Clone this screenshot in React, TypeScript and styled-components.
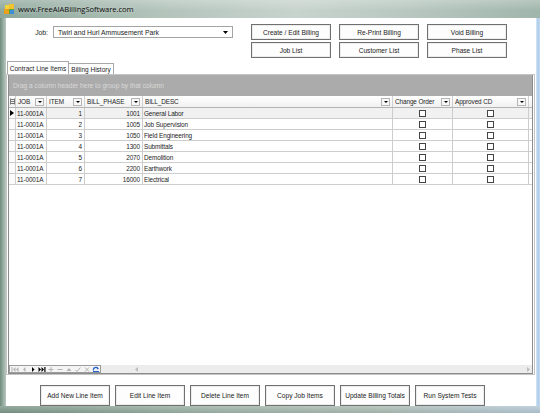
import styled, { createGlobalStyle } from "styled-components";

const GlobalStyle = createGlobalStyle`
  html, body {
    margin: 0;
    padding: 0;
    background: #fff;
  }
  body {
    font-family: "Liberation Sans", Arial, sans-serif;
  }
  * {
    box-sizing: border-box;
  }
`;

const Window = styled.div`
  width: 540px;
  height: 413px;
  display: flex;
  flex-direction: column;
  overflow: hidden;
  font-family: "Liberation Sans", Arial, sans-serif;
  color: #1c1c1c;
`;

const TitleBar = styled.div`
  height: 18px;
  flex: none;
  display: flex;
  align-items: center;
  gap: 3px;
  padding-left: 4px;
  background:
    linear-gradient(to bottom, rgba(255, 255, 255, 0.25), rgba(255, 255, 255, 0) 60%),
    linear-gradient(to right, #8ea79b 0%, #b3c4bb 30%, #c7d3cd 55%, #b8c8c0 75%, #a0b5ab 100%);
`;

const TitleText = styled.span`
  font-family: "Open Sans", "Liberation Sans", sans-serif;
  font-size: 7.6px;
  letter-spacing: -0.05px;
  color: #0b0b0b;
  text-shadow: 0 0 4px rgba(255, 255, 255, 0.7);
`;

const Middle = styled.div`
  flex: 1;
  display: flex;
  min-height: 0;
`;

const LeftFrame = styled.div`
  width: 6px;
  flex: none;
  background: linear-gradient(to right, #6f8b7e, #94ab9f 50%, #b7c8bf);
`;

const RightFrame = styled.div`
  width: 4px;
  flex: none;
  background: linear-gradient(to right, #dbe8f3, #a9cbeb 50%, #c9dcef);
`;

const BottomFrame = styled.div`
  height: 7px;
  flex: none;
  background:
    linear-gradient(to bottom, rgba(255, 255, 255, 0.2), rgba(0, 0, 0, 0.05)),
    linear-gradient(to right, #7a9587, #9db2a7 40%, #a9bab1 70%, #b3c6d4 100%);
`;

const Client = styled.div`
  flex: 1;
  display: flex;
  flex-direction: column;
  background: #fff;
  min-width: 0;
`;

const TopSection = styled.div`
  height: 43px;
  flex: none;
  display: flex;
  align-items: flex-start;
  padding-top: 6px;
`;

const JobGroup = styled.div`
  display: flex;
  align-items: center;
  gap: 5px;
  margin-top: 2px;
`;

const JobLabel = styled.label`
  width: 42px;
  text-align: right;
  font-size: 6.8px;
`;

const Combo = styled.div`
  width: 180px;
  height: 12px;
  display: flex;
  align-items: center;
  padding: 0 4px;
  border: 1px solid #a4a4a4;
  background: #fff;
  font-size: 6.8px;
`;

const ComboText = styled.span`
  flex: 1;
  white-space: nowrap;
`;

const ButtonGrid = styled.div`
  margin-left: 18px;
  display: grid;
  grid-template-columns: repeat(3, 80px);
  grid-auto-rows: 16px;
  column-gap: 8px;
  row-gap: 2px;
`;

const WinButton = styled.button<{ $h?: number }>`
  height: ${(p) => p.$h ?? 16}px;
  width: 100%;
  padding: 0;
  margin: 0;
  border: 1px solid #707070;
  background: #fdfdfd;
  box-shadow: inset 0 0 0 1px #ececec;
  font-family: "Liberation Sans", Arial, sans-serif;
  font-size: 6.6px;
  color: #222;
  white-space: nowrap;
`;

const TabStrip = styled.div`
  height: 13px;
  flex: none;
  display: flex;
  align-items: flex-end;
  padding-left: 1px;
`;

const Tab = styled.div<{ $active?: boolean; $w: number }>`
  width: ${(p) => p.$w}px;
  height: ${(p) => (p.$active ? 13 : 11)}px;
  display: flex;
  align-items: center;
  justify-content: center;
  font-size: 6.5px;
  background: #fff;
  border: 1px solid #a8a8a8;
  border-bottom: none;
  margin-left: ${(p) => (p.$active ? 0 : -1)}px;
  position: relative;
  z-index: ${(p) => (p.$active ? 1 : 0)};
  white-space: nowrap;
`;

const TabPage = styled.div`
  height: 301px;
  flex: none;
  border: 1px solid #c4c4c4;
  padding: 0 1px 0 1px;
  display: flex;
  margin-right: 1px;
`;

const Grid = styled.div`
  flex: 1;
  display: flex;
  flex-direction: column;
  border-left: 1px solid #8c8c8c;
  border-right: 1px solid #8c8c8c;
  background: #fff;
`;

const GroupPanel = styled.div`
  height: 21px;
  flex: none;
  display: flex;
  align-items: center;
  padding-left: 4px;
  background: #ababab;
  color: #d9d9d9;
  font-size: 6.6px;
`;

const Row = styled.div<{ $header?: boolean; $current?: boolean }>`
  display: flex;
  height: ${(p) => (p.$header ? 12 : 11)}px;
  flex: none;
  background: ${(p) =>
    p.$header
      ? "linear-gradient(to bottom, #ffffff, #f1f1f1)"
      : p.$current
      ? "#f1f1f1"
      : "#fff"};
  border-bottom: 1px solid ${(p) => (p.$header ? "#b3b3b3" : "#cdcdcd")};
`;

const Cell = styled.div<{ $w: number; $align?: string; $header?: boolean }>`
  width: ${(p) => p.$w}px;
  flex: none;
  display: flex;
  align-items: center;
  justify-content: ${(p) => p.$align ?? "flex-start"};
  padding: 0 2px 0 1px;
  border-right: 1px solid ${(p) => (p.$header ? "#d0d0d0" : "#cdcdcd")};
  font-size: 6.4px;
  letter-spacing: -0.1px;
  white-space: nowrap;
  overflow: hidden;
`;

const Indicator = styled.div<{ $header?: boolean }>`
  width: 7px;
  flex: none;
  display: flex;
  align-items: center;
  justify-content: center;
  border-right: 1px solid #cdcdcd;
  background: ${(p) => (p.$header ? "transparent" : "#fbfbfb")};
`;

const HeaderLabel = styled.span`
  flex: 1;
  padding-left: 1px;
`;

const DropButton = styled.span`
  width: 9px;
  height: 8px;
  flex: none;
  display: flex;
  align-items: center;
  justify-content: center;
  border: 1px solid #b5b5b5;
  background: #f7f7f7;
`;

const Check = styled.span`
  width: 7px;
  height: 7px;
  border: 1px solid #444;
  background: #fff;
`;

const Body = styled.div`
  flex: 1;
  display: flex;
  flex-direction: column;
`;

const Footer = styled.div`
  height: 9px;
  flex: none;
  display: flex;
  border-bottom: 1px solid #8c8c8c;
`;

const Navigator = styled.div`
  width: 92px;
  flex: none;
  display: flex;
  align-items: center;
  gap: 1px;
  padding-left: 1px;
  background: #f4f4f4;
  border: 1px solid #9c9c9c;
`;

const NavIcon = styled.svg`
  width: 8px;
  height: 7px;
  flex: none;
`;

const ScrollStrip = styled.div`
  flex: 1;
  display: flex;
  align-items: center;
  justify-content: space-between;
  padding: 0 2px 0 34px;
  background: #ececec;
`;

const BottomBar = styled.div`
  flex: 1;
  display: flex;
  align-items: flex-start;
  gap: 5px;
  padding: 10px 0 0 34px;
`;

const BottomButton = styled(WinButton)`
  width: 70px;
`;

const Tri = ({ color = "#000" }: { color?: string }) => (
  <svg width="5" height="3" viewBox="0 0 5 3">
    <path d="M0 0 L5 0 L2.5 3 Z" fill={color} />
  </svg>
);

const columns = [
  { key: "job", title: "JOB", w: 31 },
  { key: "item", title: "ITEM", w: 38 },
  { key: "phase", title: "BILL_PHASE", w: 58 },
  { key: "desc", title: "BILL_DESC", w: 250 },
  { key: "co", title: "Change Order", w: 60 },
  { key: "acd", title: "Approved CD", w: 76 },
];

const rows = [
  { item: 1, phase: 1001, desc: "General Labor" },
  { item: 2, phase: 1005, desc: "Job Supervision" },
  { item: 3, phase: 1050, desc: "Field Engineering" },
  { item: 4, phase: 1300, desc: "Submittals" },
  { item: 5, phase: 2070, desc: "Demolition" },
  { item: 6, phase: 2200, desc: "Earthwork" },
  { item: 7, phase: 16000, desc: "Electrical" },
];

const AppIcon = () => (
  <svg width="11" height="11" viewBox="0 0 11 11">
    <rect x="0" y="5" width="5" height="5" fill="#e9a21b" />
    <rect x="5" y="5" width="5" height="5" fill="#5ea82e" />
    <rect x="1" y="1" width="4" height="4" fill="#f4d23b" />
    <rect x="5" y="0" width="5" height="5" fill="#f2c230" />
    <rect x="6" y="6" width="4" height="4" fill="#3f8fd8" />
  </svg>
);

const gray = "#b4b4b4";

function NavBar() {
  return (
    <Navigator>
      <NavIcon viewBox="0 0 8 7">
        <rect x="0.5" y="1" width="1" height="5" fill={gray} />
        <path d="M4.5 1 L2 3.5 L4.5 6 Z M7.5 1 L5 3.5 L7.5 6 Z" fill={gray} />
      </NavIcon>
      <NavIcon viewBox="0 0 8 7">
        <path d="M5.5 1 L3 3.5 L5.5 6 Z" fill={gray} />
      </NavIcon>
      <NavIcon viewBox="0 0 8 7">
        <path d="M3 1 L5.5 3.5 L3 6 Z" fill="#000" />
      </NavIcon>
      <NavIcon viewBox="0 0 8 7">
        <path d="M0.5 1 L3 3.5 L0.5 6 Z M3.5 1 L6 3.5 L3.5 6 Z" fill="#000" />
        <rect x="6.3" y="1" width="1.2" height="5" fill="#000" />
      </NavIcon>
      <NavIcon viewBox="0 0 8 7">
        <path d="M4 1 V6 M1.5 3.5 H6.5" stroke={gray} strokeWidth="1" />
      </NavIcon>
      <NavIcon viewBox="0 0 8 7">
        <path d="M1.5 3.5 H6.5" stroke={gray} strokeWidth="1" />
      </NavIcon>
      <NavIcon viewBox="0 0 8 7">
        <path d="M1.5 5 L4 2 L6.5 5 Z" fill={gray} />
      </NavIcon>
      <NavIcon viewBox="0 0 8 7">
        <path d="M1.5 4 L3 5.5 L6.5 1.5" stroke={gray} strokeWidth="1" fill="none" />
      </NavIcon>
      <NavIcon viewBox="0 0 8 7">
        <path d="M2 1.5 L6 5.5 M6 1.5 L2 5.5" stroke={gray} strokeWidth="1" />
      </NavIcon>
      <NavIcon viewBox="0 0 8 7">
        <path d="M1.5 4.5 A2.5 2.5 0 0 1 6 2.5" stroke="#2a63c9" strokeWidth="1.2" fill="none" />
        <path d="M5 1 L7 2.8 L4.8 3.6 Z" fill="#2a63c9" />
        <rect x="1" y="5" width="6" height="1.2" fill="#2a63c9" />
      </NavIcon>
    </Navigator>
  );
}

export default function App() {
  return (
    <Window>
      <GlobalStyle />
      <TitleBar>
        <AppIcon />
        <TitleText>www.FreeAIABillingSoftware.com</TitleText>
      </TitleBar>
      <Middle>
        <LeftFrame />
        <Client>
          <TopSection>
            <JobGroup>
              <JobLabel>Job:</JobLabel>
              <Combo>
                <ComboText>Twirl and Hurl Ammusement Park</ComboText>
                <Tri />
              </Combo>
            </JobGroup>
            <ButtonGrid>
              <WinButton>Create / Edit Billing</WinButton>
              <WinButton>Re-Print Billing</WinButton>
              <WinButton>Void Billing</WinButton>
              <WinButton>Job List</WinButton>
              <WinButton>Customer List</WinButton>
              <WinButton>Phase List</WinButton>
            </ButtonGrid>
          </TopSection>

          <TabStrip>
            <Tab $active $w={62}>
              Contract Line Items
            </Tab>
            <Tab $w={46}>Billing History</Tab>
          </TabStrip>

          <TabPage>
            <Grid>
              <GroupPanel>Drag a column header here to group by that column</GroupPanel>
              <Row $header>
                <Indicator $header>
                  <svg width="5" height="7" viewBox="0 0 5 7">
                    <path d="M0.5 0.5 V6.5 M4.5 0.5 V6.5" stroke="#555" strokeWidth="0.8" />
                    <path d="M1 1.5 H4 M1 3.5 H4 M1 5.5 H4" stroke="#555" strokeWidth="0.8" />
                  </svg>
                </Indicator>
                {columns.map((c) => (
                  <Cell key={c.key} $w={c.w} $header>
                    <HeaderLabel>{c.title}</HeaderLabel>
                    <DropButton>
                      <svg width="4" height="2" viewBox="0 0 4 2">
                        <path d="M0 0 L4 0 L2 2 Z" fill="#000" />
                      </svg>
                    </DropButton>
                  </Cell>
                ))}
              </Row>
              <Body>
                {rows.map((r, i) => (
                  <Row key={r.item} $current={i === 0}>
                    <Indicator>
                      {i === 0 && (
                        <svg width="4" height="6" viewBox="0 0 4 6">
                          <path d="M0 0 L4 3 L0 6 Z" fill="#000" />
                        </svg>
                      )}
                    </Indicator>
                    <Cell $w={31}>11-0001A</Cell>
                    <Cell $w={38} $align="flex-end">
                      {r.item}
                    </Cell>
                    <Cell $w={58} $align="flex-end">
                      {r.phase}
                    </Cell>
                    <Cell $w={250}>{r.desc}</Cell>
                    <Cell $w={60} $align="center">
                      <Check />
                    </Cell>
                    <Cell $w={76} $align="center">
                      <Check />
                    </Cell>
                  </Row>
                ))}
              </Body>
              <Footer>
                <NavBar />
                <ScrollStrip>
                  <svg width="3" height="5" viewBox="0 0 3 5">
                    <path d="M3 0 L0 2.5 L3 5 Z" fill="#bdbdbd" />
                  </svg>
                  <svg width="3" height="5" viewBox="0 0 3 5">
                    <path d="M0 0 L3 2.5 L0 5 Z" fill="#bdbdbd" />
                  </svg>
                </ScrollStrip>
              </Footer>
            </Grid>
          </TabPage>

          <BottomBar>
            <BottomButton $h={21}>Add New Line Item</BottomButton>
            <BottomButton $h={21}>Edit Line Item</BottomButton>
            <BottomButton $h={21}>Delete Line Item</BottomButton>
            <BottomButton $h={21}>Copy Job Items</BottomButton>
            <BottomButton $h={21}>Update Billing Totals</BottomButton>
            <BottomButton $h={21}>Run System Tests</BottomButton>
          </BottomBar>
        </Client>
        <RightFrame />
      </Middle>
      <BottomFrame />
    </Window>
  );
}
